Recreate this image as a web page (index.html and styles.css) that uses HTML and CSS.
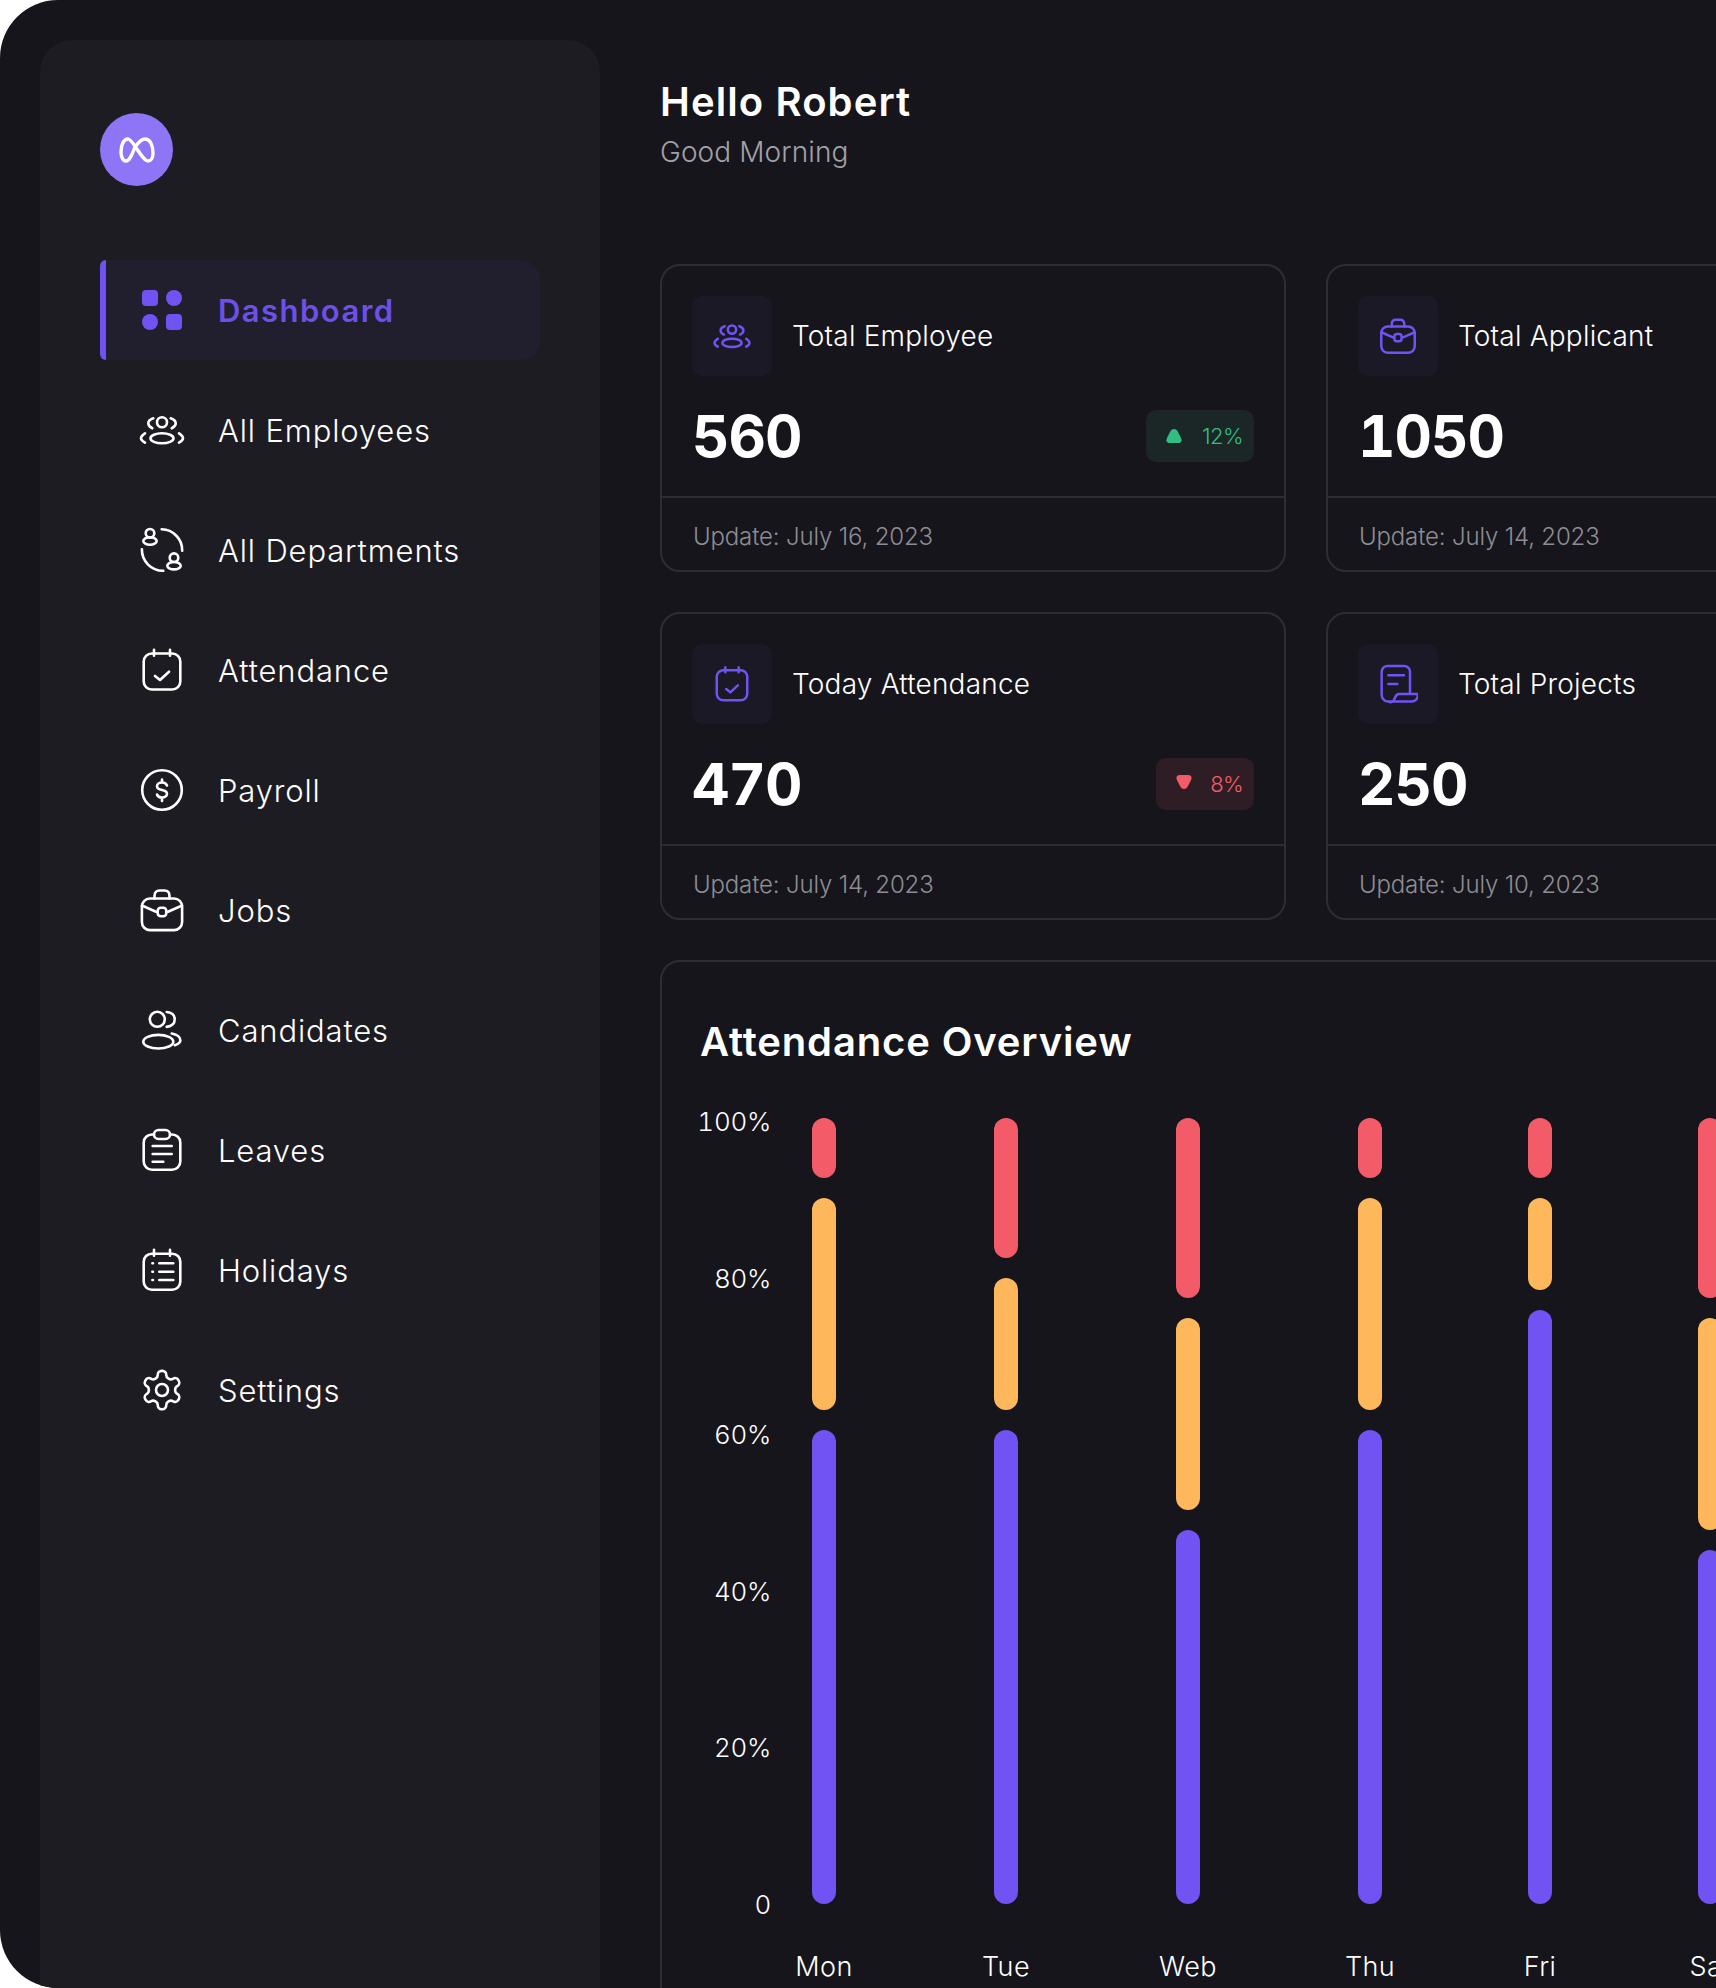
FILE: index.html
```html
<!DOCTYPE html>
<html lang="en">

<head>
    <meta charset="UTF-8">
    <meta name="viewport" content="width=device-width, initial-scale=1.0">
    <title>Dashboard</title>
    <link rel="stylesheet" href="styles.css">
</head>

<body>
    <svg class="sprite" aria-hidden="true">
        <symbol id="i-employees" viewBox="0 0 48 48">
            <circle cx="24" cy="16.3" r="5" />
            <path d="M15.300 12.300Q10.300 14 10.300 17.300 10.300 20.500 14.300 22.300M32.700 12.300Q37.700 14 37.700 17.300 37.700 20.500 33.700 22.300" />
            <ellipse cx="24" cy="32.3" rx="11.5" ry="5" />
            <path d="M7 27.300Q3 30 3 32.300 3 34.500 7 36.700M41 27.300Q45 30 45 32.300 45 34.500 41 36.700" />
        </symbol>
        <symbol id="i-departments" viewBox="0 0 48 48">
            <circle cx="12" cy="7.3" r="4.3" />
            <ellipse cx="12" cy="15" rx="6.7" ry="3.7" />
            <circle cx="36" cy="31.7" r="4.3" />
            <ellipse cx="36" cy="39.7" rx="6.7" ry="3.7" />
            <path d="M23.700 3.300a21 21 0 0 1 20.500 21.400M3.900 23.300a21 21 0 0 0 21.400 21.400" />
        </symbol>
        <symbol id="i-calendar" viewBox="0 0 48 48">
            <rect x="5.700" y="7.500" width="36.600" height="36" rx="8" />
            <path d="M16 3.800v6M32 3.800v6M17 30l5 4 9-8.300" />
        </symbol>
        <symbol id="i-payroll" viewBox="0 0 48 48">
            <circle cx="24" cy="24" r="19.800" />
            <path d="M29 19.500c-.6-1.700-2.600-3-5-3-2.800 0-5 1.600-5 3.700 0 2 2.200 3.300 5 3.800 2.800.5 5 1.800 5 3.800 0 2.100-2.200 3.700-5 3.700-2.400 0-4.400-1.300-5-3M24 13.500v3M24 31.500v3.500" />
        </symbol>
        <symbol id="i-jobs" viewBox="0 0 48 48">
            <rect x="3.900" y="12.500" width="40.200" height="31.600" rx="8" />
            <path d="M16.500 12.500V10c0-3.500 2-5.500 5-5.500h5c3 0 5 2 5 5.500v2.500M3.900 19.500L18 25.700M44.100 19.500L30 25.700" />
            <rect x="19.700" y="21.700" width="8.600" height="8.600" rx="3" />
        </symbol>
        <symbol id="i-candidates" viewBox="0 0 48 48">
            <circle cx="19.3" cy="13.3" r="7.500" />
            <path d="M28.700 6c5 .5 8 3.200 8 7.300 0 4-3 7-8 7.600" />
            <ellipse cx="20.300" cy="35.700" rx="15" ry="6.800" />
            <path d="M33.700 27.500c5 1 8.700 3.700 8.700 6.700 0 2-2 3.800-5.700 5" />
        </symbol>
        <symbol id="i-leaves" viewBox="0 0 48 48">
            <path d="M16 8.500h-2c-4.500 0-8.300 3.500-8.300 8v19c0 4.500 3.800 8.300 8.300 8.300h20c4.600 0 8.300-3.800 8.300-8.300v-19c0-4.500-3.700-8-8.300-8h-2" />
            <rect x="16" y="4" width="16" height="9" rx="4.500" />
            <path d="M14.700 20h19M14.700 28h19M14.700 35.700h10.600" />
        </symbol>
        <symbol id="i-holidays" viewBox="0 0 48 48">
            <rect x="5.700" y="7.700" width="36.600" height="36" rx="8" />
            <path d="M16 3.800v6M32 3.800v6M21.300 17.300h14M21.300 25.700h14M21.300 34h14M14.400 17.300h.6M14.400 25.700h.6M14.400 34h.6" />
        </symbol>
        <symbol id="i-settings" viewBox="0 0 48 48">
            <path transform="translate(1 1) scale(1.917)" style="stroke-width:1.35" d="M12.220 2h-.44a2 2 0 0 0-2 2v.18a2 2 0 0 1-1 1.730l-.43.250a2 2 0 0 1-2 0l-.15-.08a2 2 0 0 0-2.730.730l-.22.38a2 2 0 0 0 .73 2.730l.15.1a2 2 0 0 1 1 1.720v.51a2 2 0 0 1-1 1.740l-.15.09a2 2 0 0 0-.73 2.730l.22.38a2 2 0 0 0 2.730.73l.15-.08a2 2 0 0 1 2 0l.43.25a2 2 0 0 1 1 1.730V20a2 2 0 0 0 2 2h.44a2 2 0 0 0 2-2v-.18a2 2 0 0 1 1-1.730l.43-.25a2 2 0 0 1 2 0l.15.08a2 2 0 0 0 2.730-.73l.22-.39a2 2 0 0 0-.73-2.730l-.15-.08a2 2 0 0 1-1-1.740v-.5a2 2 0 0 1 1-1.740l.15-.09a2 2 0 0 0 .73-2.730l-.22-.38a2 2 0 0 0-2.730-.73l-.15.08a2 2 0 0 1-2 0l-.43-.25a2 2 0 0 1-1-1.730V4a2 2 0 0 0-2-2z" />
            <circle cx="24" cy="24" r="6" />
        </symbol>
        <symbol id="i-projects" viewBox="0 0 48 48">
            <path d="M38.400 36V9.400a7 7 0 0 0-7-7H11.400a7 7 0 0 0-7 7V37a8 8 0 0 0 8 8h28a7 7 0 0 0 7-9H25.500a5 5 0 0 0-4.500 3.500l-1.500 2.700a4.500 4.500 0 0 1-7 2.800" />
            <path d="M12.400 13.600h18.800M12.400 24h10.800" />
        </symbol>
    </svg>

    <div class="app">
        <aside class="sidebar">
            <div class="logo">
                <svg class="logo-mark" viewBox="0 0 36 26">
                    <path d="M2 15C2 8 4.500 2 9 2c5 0 14 22 20 22 3 0 5-3 5-8 0-8-3-14-8-14-4 0-7 4-10 8-3 7-5 14-9 14-3 0-5-4-5-9z" />
                </svg>
            </div>
            <nav class="nav">
                <a class="nav-item active">
                    <svg class="icon" viewBox="0 0 48 48">
                        <rect class="solid" x="4" y="4" width="16" height="16" rx="4" />
                        <circle class="solid" cx="36" cy="12" r="8" />
                        <circle class="solid" cx="12" cy="36" r="8" />
                        <rect class="solid" x="28" y="28" width="16" height="16" rx="4" />
                    </svg>
                    <span>Dashboard</span>
                </a>
                <a class="nav-item"><svg class="icon"><use href="#i-employees" /></svg><span>All Employees</span></a>
                <a class="nav-item"><svg class="icon"><use href="#i-departments" /></svg><span>All Departments</span></a>
                <a class="nav-item"><svg class="icon"><use href="#i-calendar" /></svg><span>Attendance</span></a>
                <a class="nav-item"><svg class="icon"><use href="#i-payroll" /></svg><span>Payroll</span></a>
                <a class="nav-item"><svg class="icon"><use href="#i-jobs" /></svg><span>Jobs</span></a>
                <a class="nav-item"><svg class="icon"><use href="#i-candidates" /></svg><span>Candidates</span></a>
                <a class="nav-item"><svg class="icon"><use href="#i-leaves" /></svg><span>Leaves</span></a>
                <a class="nav-item"><svg class="icon"><use href="#i-holidays" /></svg><span>Holidays</span></a>
                <a class="nav-item"><svg class="icon"><use href="#i-settings" /></svg><span>Settings</span></a>
            </nav>
        </aside>

        <main class="main">
            <header class="header">
                <h1>Hello Robert</h1>
                <p>Good Morning</p>
            </header>

            <section class="cards">
                <div class="card">
                    <div class="card-body">
                        <div class="card-title">
                            <div class="card-icon"><svg class="icon-small"><use href="#i-employees" /></svg></div>
                            <span>Total Employee</span>
                        </div>
                        <div class="card-stat">
                            <strong>560</strong>
                            <div class="badge up">
                                <svg viewBox="0 0 16 14"><path d="M8 0c2 0 3 1 4 3l3 6c1.500 3 0 5-3 5H4C1 14-.5 12 1 9l3-6c1-2 2-3 4-3z" /></svg>
                                <span>12%</span>
                            </div>
                        </div>
                    </div>
                    <div class="card-foot">Update: July 16, 2023</div>
                </div>
                <div class="card">
                    <div class="card-body">
                        <div class="card-title">
                            <div class="card-icon"><svg class="icon-small"><use href="#i-jobs" /></svg></div>
                            <span>Total Applicant</span>
                        </div>
                        <div class="card-stat"><strong>1050</strong></div>
                    </div>
                    <div class="card-foot">Update: July 14, 2023</div>
                </div>
                <div class="card">
                    <div class="card-body">
                        <div class="card-title">
                            <div class="card-icon"><svg class="icon-small"><use href="#i-calendar" /></svg></div>
                            <span>Today Attendance</span>
                        </div>
                        <div class="card-stat">
                            <strong>470</strong>
                            <div class="badge down">
                                <svg viewBox="0 0 16 14"><path d="M8 14c-2 0-3-1-4-3L1 5C-.5 2 1 0 4 0h8c3 0 4.500 2 3 5l-3 6c-1 2-2 3-4 3z" /></svg>
                                <span>8%</span>
                            </div>
                        </div>
                    </div>
                    <div class="card-foot">Update: July 14, 2023</div>
                </div>
                <div class="card">
                    <div class="card-body">
                        <div class="card-title">
                            <div class="card-icon"><svg class="icon-small"><use href="#i-projects" /></svg></div>
                            <span>Total Projects</span>
                        </div>
                        <div class="card-stat"><strong>250</strong></div>
                    </div>
                    <div class="card-foot">Update: July 10, 2023</div>
                </div>
            </section>

            <section class="overview">
                <h2>Attendance Overview</h2>
                <div class="chart">
                    <div class="axis">
                        <span>100%</span>
                        <span>80%</span>
                        <span>60%</span>
                        <span>40%</span>
                        <span>20%</span>
                        <span>0</span>
                    </div>
                    <div class="col">
                        <div class="stack">
                            <i class="bar red" style="height:60px"></i>
                            <i class="bar orange" style="height:212px"></i>
                            <i class="bar purple" style="height:474px"></i>
                        </div>
                        <span>Mon</span>
                    </div>
                    <div class="col">
                        <div class="stack">
                            <i class="bar red" style="height:140px"></i>
                            <i class="bar orange" style="height:132px"></i>
                            <i class="bar purple" style="height:474px"></i>
                        </div>
                        <span>Tue</span>
                    </div>
                    <div class="col">
                        <div class="stack">
                            <i class="bar red" style="height:180px"></i>
                            <i class="bar orange" style="height:192px"></i>
                            <i class="bar purple" style="height:374px"></i>
                        </div>
                        <span>Web</span>
                    </div>
                    <div class="col">
                        <div class="stack">
                            <i class="bar red" style="height:60px"></i>
                            <i class="bar orange" style="height:212px"></i>
                            <i class="bar purple" style="height:474px"></i>
                        </div>
                        <span>Thu</span>
                    </div>
                    <div class="col narrow">
                        <div class="stack">
                            <i class="bar red" style="height:60px"></i>
                            <i class="bar orange" style="height:92px"></i>
                            <i class="bar purple" style="height:594px"></i>
                        </div>
                        <span>Fri</span>
                    </div>
                    <div class="col">
                        <div class="stack">
                            <i class="bar red" style="height:180px"></i>
                            <i class="bar orange" style="height:212px"></i>
                            <i class="bar purple" style="height:354px"></i>
                        </div>
                        <span>Sat</span>
                    </div>
                </div>
            </section>
        </main>
    </div>
</body>

</html>
```

FILE: styles.css
```css
* {
    box-sizing: border-box;
}

body {
    margin: 0;
    background-color: #fff;
    color: #fff;
    font-family: "Inter", "Liberation Sans", sans-serif;
    font-weight: 300;
}

.sprite {
    display: none;
}

.app {
    display: flex;
    width: 1716px;
    height: 1988px;
    padding-left: 40px;
    overflow: hidden;
    background-color: #16151c;
    border-radius: 58px 0 0 58px;
}

/* sidebar */
.sidebar {
    flex: none;
    width: 560px;
    height: 2000px;
    margin-top: 40px;
    padding: 73px 60px 0;
    background-color: #1d1c22;
    border-radius: 32px 32px 0 0;
}

.logo {
    display: flex;
    align-items: center;
    justify-content: center;
    width: 73px;
    height: 73px;
    background-color: #8d75f5;
    border-radius: 50%;
}

.logo-mark {
    width: 36px;
    height: 26px;
    fill: none;
    stroke: #fff;
    stroke-width: 3.4;
}

.nav {
    display: flex;
    flex-direction: column;
    gap: 20px;
    margin-top: 74px;
}

.nav-item {
    display: flex;
    align-items: center;
    gap: 32px;
    height: 100px;
    padding-left: 38px;
    font-size: 31px;
    letter-spacing: 0.85px;
    color: #fff;
}

.nav-item.active {
    background-color: #211f2e;
    border-left: 6px solid #7152f3;
    border-radius: 6px 20px 20px 6px;
    padding-left: 32px;
    color: #6c50e8;
    font-weight: 600;
    letter-spacing: 1.45px;
}

.icon {
    flex: none;
    width: 48px;
    height: 48px;
    fill: none;
    stroke: currentColor;
    stroke-width: 2.6;
    stroke-linecap: round;
    stroke-linejoin: round;
}

.icon .solid {
    fill: #7152f3;
    stroke: none;
}

/* main */
.main {
    flex: none;
    width: 1292px;
    margin-left: 60px;
    padding-top: 78px;
}

.header {
    margin-bottom: 94px;
}

.header h1 {
    margin: 0 0 8px;
    font-size: 40px;
    line-height: 48px;
    font-weight: 600;
    letter-spacing: 1.1px;
}

.header p {
    margin: 0;
    font-size: 28px;
    line-height: 36px;
    letter-spacing: 0.1px;
    color: #a2a1a8;
}

.cards {
    display: grid;
    grid-template-columns: repeat(2, 626px);
    gap: 40px;
}

.card {
    height: 308px;
    border: 2px solid #2e2d34;
    border-radius: 20px;
}

.card-body {
    padding: 30px 30px 34px;
}

.card-title {
    display: flex;
    align-items: center;
    gap: 20px;
    font-size: 28px;
    letter-spacing: 0.2px;
}

.card-icon {
    display: flex;
    align-items: center;
    justify-content: center;
    width: 80px;
    height: 80px;
    color: #7152f3;
    background-color: #1b1926;
    border-radius: 10px;
}

.icon-small {
    width: 40px;
    height: 40px;
    fill: none;
    stroke: currentColor;
    stroke-width: 3;
    stroke-linecap: round;
    stroke-linejoin: round;
}

.card-stat {
    display: flex;
    align-items: center;
    justify-content: space-between;
    height: 52px;
    margin-top: 34px;
}

.card-stat strong {
    font-size: 58px;
    font-weight: 700;
    font-variant-numeric: tabular-nums;
    letter-spacing: -1px;
}

.badge {
    display: flex;
    align-items: center;
    gap: 20px;
    height: 52px;
    padding: 0 11px 0 20px;
    font-size: 22px;
    letter-spacing: -0.6px;
    border-radius: 10px;
}

.badge svg {
    width: 16px;
    height: 14px;
    fill: currentColor;
}

.badge.up {
    color: #30be82;
    background-color: #1b2626;
}

.badge.down {
    gap: 18px;
    color: #f45b69;
    background-color: #2e1d24;
}

.badge.down svg {
    margin-top: -4px;
}

.card-foot {
    display: flex;
    align-items: center;
    height: 74px;
    padding: 4px 31px 0;
    font-size: 24px;
    letter-spacing: -0.15px;
    color: #8e8d93;
    border-top: 2px solid #2e2d34;
}

/* chart */
.overview {
    height: 1100px;
    margin-top: 40px;
    padding: 56px 38px 0;
    border: 2px solid #2e2d34;
    border-radius: 20px;
}

.overview h2 {
    margin: 0;
    font-size: 40px;
    line-height: 48px;
    font-weight: 600;
    letter-spacing: 0.85px;
}

.chart {
    display: flex;
    gap: 120px;
    margin-top: 40px;
    font-size: 27px;
    line-height: 32px;
    letter-spacing: 0.4px;
}

.axis {
    display: flex;
    flex-direction: column;
    justify-content: space-between;
    flex: none;
    width: 76px;
    height: 815px;
    margin-left: -5px;
    margin-right: -98px;
    text-align: right;
    font-size: 26px;
    letter-spacing: -0.3px;
    font-variant-numeric: tabular-nums;
}

.col {
    display: flex;
    flex-direction: column;
    align-items: center;
    flex: none;
    width: 62px;
    padding-top: 12px;
}

.col.narrow {
    width: 38px;
}

.stack {
    display: flex;
    flex-direction: column;
    gap: 20px;
    margin-bottom: 47px;
}

.bar {
    display: block;
    width: 24px;
    border-radius: 12px;
}

.red {
    background-color: #f45b69;
}

.orange {
    background-color: #feb85b;
}

.purple {
    background-color: #7152f3;
}
```
